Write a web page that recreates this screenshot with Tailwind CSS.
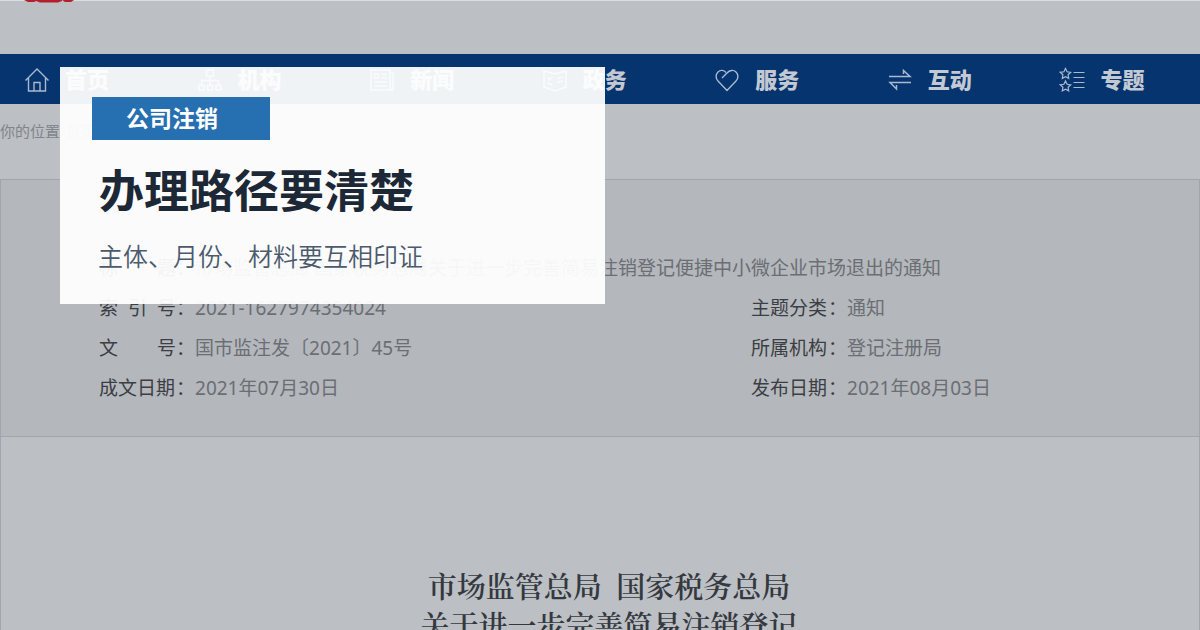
<!DOCTYPE html>
<html lang="zh-CN">
<head>
    <meta charset="UTF-8">
    <meta name="viewport" content="width=device-width, initial-scale=1.0">
    <title>办理路径要清楚</title>
    <script src="https://cdn.jsdelivr.net/npm/@tailwindcss/browser@4"></script>
</head>
<body class="relative h-screen overflow-hidden bg-[#bcbfc4] font-['Noto_Sans','Noto_Sans_CJK_SC',sans-serif]">
    <!-- Site header -->
    <header>
        <div class="h-[54px] border-t border-[#dcdde0] pl-6">
            <svg class="-mt-px h-[3px] w-[50px]" viewBox="0 0 50 3" fill="#b3202b">
                <path d="M0 0h12v1l-2 1H4z M12 0h26v1l-4 1.500H16l-4-1.500z M38 0h12l-3 2h-6z"/>
            </svg>
        </div>
        <nav class="h-[50px] overflow-hidden bg-[#06346f] text-[22px] font-black text-[#c3c9d2]">
            <div class="-mr-2 grid h-full grid-cols-7 pt-px">
                <a href="#" class="flex items-center gap-[15px] pl-6">
                    <svg class="size-[26px]" viewBox="0 0 26 26" fill="none" stroke="#a9bad0" stroke-width="1.4">
                        <path d="M1.5 13.5L13 2l11.500 11.500M4.500 11v13h17V11M10 24v-8.500h6V24"/>
                    </svg>
                    首页
                </a>
                <a href="#" class="flex items-center gap-[15px] pl-6">
                    <svg class="size-[26px]" viewBox="0 0 26 26" fill="none" stroke="#a9bad0" stroke-width="1.4">
                        <path d="M9.500 3h7v6h-7zM13 9v9M4.500 18v-4.500h17V18M2 18.500h5V23H2zM10.500 18.500h5V23h-5zM19 18.500h5V23h-5z"/>
                    </svg>
                    机构
                </a>
                <a href="#" class="flex items-center gap-[15px] pl-6">
                    <svg class="size-[26px]" viewBox="0 0 26 26" fill="none" stroke="#a9bad0" stroke-width="1.4">
                        <path d="M2 3h19v20H2zM21 6h3v17h-5M5.500 7h4v4h-4zM12 7.500h6M12 11h6M5.500 15h12.500M5.500 19h12.500"/>
                    </svg>
                    新闻
                </a>
                <a href="#" class="flex items-center gap-[15px] pl-6">
                    <svg class="size-[26px]" viewBox="0 0 26 26" fill="none" stroke="#a9bad0" stroke-width="1.4">
                        <path d="M2 4l11 3 11-3v16l-11 4-11-4zM5.500 10l2 3 3-3M15 11.500l6-1.500M15 15.500l6-1.500M5.500 16l5 1.500"/>
                    </svg>
                    政务
                </a>
                <a href="#" class="flex items-center gap-[15px] pl-6">
                    <svg class="size-[26px]" viewBox="0 0 26 26" fill="none" stroke="#a9bad0" stroke-width="1.4">
                        <path d="M8 11l5-5c2.500-3 6.500-3.500 9-1s2.500 6.500 0 9l-9 9.500L4 14c-2.500-2.500-2.500-6.500 0-9s6-2 8 .5"/>
                    </svg>
                    服务
                </a>
                <a href="#" class="flex items-center gap-[15px] pl-6">
                    <svg class="size-[26px]" viewBox="0 0 26 26" fill="none" stroke="#a9bad0" stroke-width="1.5">
                        <path d="M2 9.500h21l-6.500-6V7M24 15.500H3L9.500 22V18"/>
                    </svg>
                    互动
                </a>
                <a href="#" class="flex items-center gap-[15px] pl-6">
                    <svg class="size-[26px]" viewBox="0 0 26 26" fill="none" stroke="#a9bad0" stroke-width="1.2">
                        <path d="M6.500 1.500l1.600 3.300 3.600.5-2.600 2.500.6 3.600-3.200-1.700-3.200 1.700.6-3.600-2.600-2.500 3.600-.5z"/>
                        <path d="M6.500 14l1.600 3.300 3.600.5-2.600 2.500.6 3.600-3.200-1.700-3.200 1.700.6-3.600-2.600-2.500 3.600-.5z"/>
                        <path d="M14.500 5.500H25.500M14.500 10.500H25.500M14.500 15.500H25.500M14.500 20.500H25.500"/>
                    </svg>
                    专题
                </a>
            </div>
        </nav>
    </header>

    <!-- Breadcrumb -->
    <div class="flex h-[75px] gap-1.5 pt-4 text-[15px] leading-[22px] text-[#80848b]">
        <span>你的位置</span>
        <a href="#">首页</a>
    </div>

    <!-- Document info -->
    <section class="border border-[#a0a5af] bg-[#b4b7bc] pt-[68px] pb-[28px] pl-[98px] text-[19px] leading-10 text-[#6b6e73]">
        <dl class="grid grid-cols-[652px_1fr]">
            <div class="col-span-2 flex">
                <dt class="flex text-[#3b3e43]"><span class="flex w-[77px] justify-between"><span>标</span><span>题</span></span>：</dt>
                <dd>市场监管总局 国家税务总局关于进一步完善简易注销登记便捷中小微企业市场退出的通知</dd>
            </div>
            <div class="flex">
                <dt class="flex text-[#3b3e43]"><span class="flex w-[77px] justify-between"><span>索</span><span>引</span><span>号</span></span>：</dt>
                <dd>2021-1627974354024</dd>
            </div>
            <div class="flex">
                <dt class="flex text-[#3b3e43]"><span class="w-[77px]">主题分类</span>：</dt>
                <dd>通知</dd>
            </div>
            <div class="flex">
                <dt class="flex text-[#3b3e43]"><span class="flex w-[77px] justify-between"><span>文</span><span>号</span></span>：</dt>
                <dd>国市监注发〔2021〕45号</dd>
            </div>
            <div class="flex">
                <dt class="flex text-[#3b3e43]"><span class="w-[77px]">所属机构</span>：</dt>
                <dd>登记注册局</dd>
            </div>
            <div class="flex">
                <dt class="flex text-[#3b3e43]"><span class="w-[77px]">成文日期</span>：</dt>
                <dd>2021年07月30日</dd>
            </div>
            <div class="flex">
                <dt class="flex text-[#3b3e43]"><span class="w-[77px]">发布日期</span>：</dt>
                <dd>2021年08月03日</dd>
            </div>
        </dl>
    </section>

    <!-- Document body -->
    <article class="border-x border-[#a0a5af] pt-[129px] pl-[18px]">
        <h2 class="text-center font-['Noto_Serif_CJK_SC','Noto_Sans_CJK_SC',serif] text-[29px] leading-[39px] font-semibold text-[#34393f]">市场监管总局&nbsp; 国家税务总局<br>关于进一步完善简易注销登记</h2>
    </article>

    <!-- Headline card -->
    <div class="absolute top-[67px] left-[60px] w-[545px] bg-white/94 pt-[30px] pb-[30px] pl-8">
        <span class="block h-[43px] w-[178px] bg-[#266fb0] pl-[34px] text-[23px] leading-[43px] font-bold text-white">公司注销</span>
        <h1 class="mt-6 pl-[7px] text-[45px] leading-[54px] font-bold text-[#1d2837]">办理路径要清楚</h1>
        <p class="mt-5 pl-[6px] text-[25px] leading-9 font-[350] text-[#4b5a6d]">主体、月份、材料要互相印证</p>
    </div>
</body>
</html>
